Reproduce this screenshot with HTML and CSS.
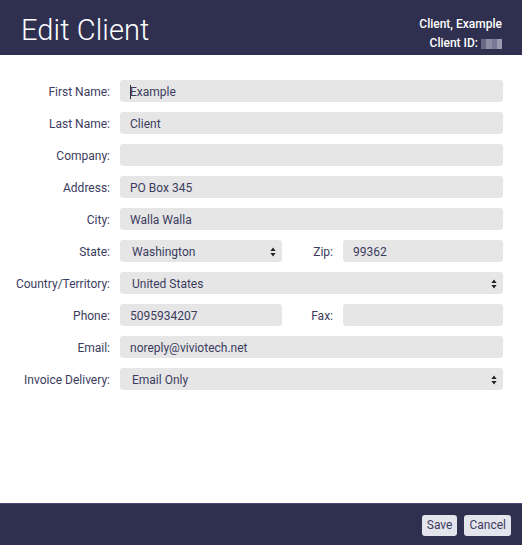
FILE: index.html
```html
<!DOCTYPE html>
<html>
<head>
<meta charset="utf-8">
<link rel="stylesheet" href="styles.css">
</head>
<body>
<div class="page">
  <header class="top">
    <h1 class="title">Edit Client</h1>
    <div class="who">
      <div>Client, Example</div>
      <div class="cid">Client ID: <span class="blur"><i class="b1"></i><i class="b2"></i><i class="b3"></i><i class="b4"></i></span></div>
    </div>
  </header>
  <main class="form">
    <label class="lbl">First Name:</label>
    <div class="inp"><span class="caret"></span>Example</div>
    <label class="lbl">Last Name:</label>
    <div class="inp">Client</div>
    <label class="lbl">Company:</label>
    <div class="inp"></div>
    <label class="lbl">Address:</label>
    <div class="inp">PO Box 345</div>
    <label class="lbl">City:</label>
    <div class="inp">Walla Walla</div>
    <label class="lbl">State:</label>
    <div class="split">
      <div class="sel half"><span>Washington</span><svg class="arr" width="6" height="10" viewBox="0 0 6 10"><path d="M3 0.5L5.6 4H0.4Z M3 9.5L5.6 6H0.4Z" fill="#222"/></svg></div>
      <label class="lbl sub">Zip:</label>
      <div class="inp grow">99362</div>
    </div>
    <label class="lbl">Country/Territory:</label>
    <div class="sel"><span>United States</span><svg class="arr" width="6" height="10" viewBox="0 0 6 10"><path d="M3 0.5L5.6 4H0.4Z M3 9.5L5.6 6H0.4Z" fill="#222"/></svg></div>
    <label class="lbl">Phone:</label>
    <div class="split">
      <div class="inp half">5095934207</div>
      <label class="lbl sub">Fax:</label>
      <div class="inp grow"></div>
    </div>
    <label class="lbl">Email:</label>
    <div class="inp">noreply@viviotech.net</div>
    <label class="lbl">Invoice Delivery:</label>
    <div class="sel"><span>Email Only</span><svg class="arr" width="6" height="10" viewBox="0 0 6 10"><path d="M3 0.5L5.6 4H0.4Z M3 9.5L5.6 6H0.4Z" fill="#222"/></svg></div>
  </main>
  <footer class="bottom">
    <button class="btn">Save</button>
    <button class="btn">Cancel</button>
  </footer>
</div>
</body>
</html>
```
FILE: styles.css
```css
* { box-sizing: border-box; }
html, body { margin: 0; padding: 0; background: #fff; }
body { font-family: Roboto, "Liberation Sans", sans-serif; }
.page { width: 522px; height: 545px; display: flex; flex-direction: column; }
.top {
  height: 55px; background: #2f2f4f; color: #fff;
  display: flex; justify-content: space-between; align-items: flex-end;
  padding: 0 20px 0 21px;
}
.title { margin: 0 0 10px 0; font-weight: 300; font-size: 29px; line-height: 29px; letter-spacing: 0.1px; }
.who { text-align: right; font-size: 12px; font-weight: 500; line-height: 19px; padding-bottom: 2px; }
.cid { display: flex; justify-content: flex-end; align-items: center; gap: 3px; }
.blur { display: inline-flex; width: 21px; height: 10px; }
.blur i { display: block; height: 10px; flex: 1; }
.b1 { background: #6a6a86; }
.b2 { background: #8d8da6; }
.b3 { background: #7a7a96; }
.b4 { background: #9a9ab0; }
.form {
  flex: 1; display: grid; grid-template-columns: 110px 1fr;
  grid-auto-rows: 22px;
  column-gap: 10px; row-gap: 10px; align-content: start;
  padding: 25px 19px 0 0;
}
.lbl { font-size: 12px; color: #3c3c5e; text-align: right; line-height: 22px; height: 22px; padding-top: 1px; white-space: nowrap; }
.inp, .sel {
  height: 22px; background: #e6e6e6; border-radius: 3px;
  font-size: 12px; color: #3c3c5e; line-height: 20px; padding: 1px 10px 0;
  display: flex; align-items: center;
}
.sel { justify-content: space-between; padding: 1px 6px 0 12px; }
.arr { display: block; }
.caret { display: inline-block; width: 1px; height: 14px; background: #333; margin-right: -1px; }
.split { display: flex; }
.half { width: 162px; flex: none; }
.sub { width: 51px; flex: none; margin-right: 10px; }
.grow { flex: 1; }
.bottom {
  height: 42px; background: #2f2f4f; border-top: 1px solid #47477a;
  display: flex; justify-content: flex-end; align-items: center; gap: 7px;
  padding: 0 11px 0 0;
}
.btn {
  font-family: Roboto, "Liberation Sans", sans-serif; font-size: 12px; color: #3c3c5e;
  background: #e4e4ec; border: none; border-radius: 3px; height: 21px; padding: 0 5px;
  margin-top: 1px;
}
```
